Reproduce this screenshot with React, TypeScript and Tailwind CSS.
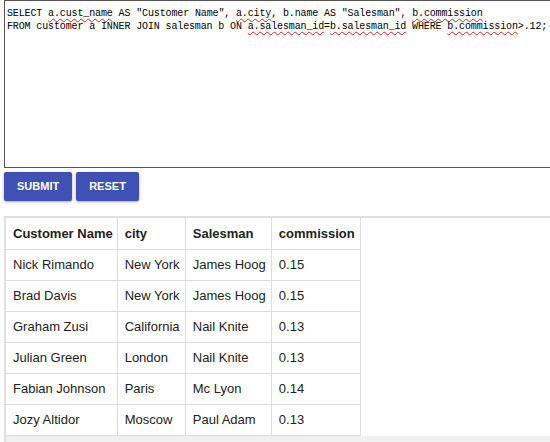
import React from "react";

const W = ({ children }: { children: React.ReactNode }) => (
  <span className="underline decoration-wavy decoration-[#e02020] decoration-1 underline-offset-[2px] [text-decoration-skip-ink:none]">{children}</span>
);

const rows = [
  ["Nick Rimando", "New York", "James Hoog", "0.15"],
  ["Brad Davis", "New York", "James Hoog", "0.15"],
  ["Graham Zusi", "California", "Nail Knite", "0.13"],
  ["Julian Green", "London", "Nail Knite", "0.13"],
  ["Fabian Johnson", "Paris", "Mc Lyon", "0.14"],
  ["Jozy Altidor", "Moscow", "Paul Adam", "0.13"],
];

const widths = [111, 68, 86, 89];

export default function App() {
  return (
    <div className="w-[550px] h-[442px] overflow-hidden bg-white" style={{ fontFamily: '"Liberation Sans", Arial, sans-serif' }}>
      <div className="ml-[4px] w-[560px] h-[168px] border border-[#555] pl-[2px] pt-[6px] text-[10px] leading-[13px] tracking-[-0.13px] text-black whitespace-pre" style={{ fontFamily: '"Liberation Mono", monospace' }}>
        <div>
          SELECT <W>a.cust_name</W> AS "Customer Name", <W>a.city</W>, b.name AS "Salesman", <W>b.commission</W>
        </div>
        <div>
          FROM customer a INNER JOIN salesman b ON <W>a.salesman_id</W>=<W>b.salesman_id</W> WHERE <W>b.commission</W>&gt;.12;
        </div>
      </div>
      <div className="flex gap-[4px] ml-[4px] mt-[4px]">
        <button className="h-[29px] px-[13px] bg-[#3f51b5] text-white text-[11px] font-bold rounded-[2px] shadow-[0_1px_3px_rgba(0,0,0,0.35)]">SUBMIT</button>
        <button className="h-[29px] px-[13px] bg-[#3f51b5] text-white text-[11px] font-bold rounded-[2px] shadow-[0_1px_3px_rgba(0,0,0,0.35)]">RESET</button>
      </div>
      <div className="ml-[4px] mt-[15px] border-t-2 border-l-2 border-[#e0e0e0] bg-white">
        <table className="table-fixed border-collapse text-[13px] leading-[15px] text-[#222] bg-white w-[355px]">
          <colgroup>
            {widths.map((w, i) => (
              <col key={i} style={{ width: w }} />
            ))}
          </colgroup>
          <thead>
            <tr className="h-[31px]">
              {["Customer Name", "city", "Salesman", "commission"].map((h) => (
                <th key={h} className="border border-[#ddd] border-t-0 first:border-l-0 text-left font-bold px-[7px] whitespace-nowrap">
                  {h}
                </th>
              ))}
            </tr>
          </thead>
          <tbody>
            {rows.map((r, ri) => (
              <tr key={ri} className="h-[31px]">
                {r.map((c, ci) => (
                  <td key={ci} className="border border-[#ddd] first:border-l-0 px-[7px] whitespace-nowrap">
                    {c}
                  </td>
                ))}
              </tr>
            ))}
          </tbody>
        </table>
        <div className="h-[20px] bg-[#f0f0f0]" />
      </div>
    </div>
  );
}
